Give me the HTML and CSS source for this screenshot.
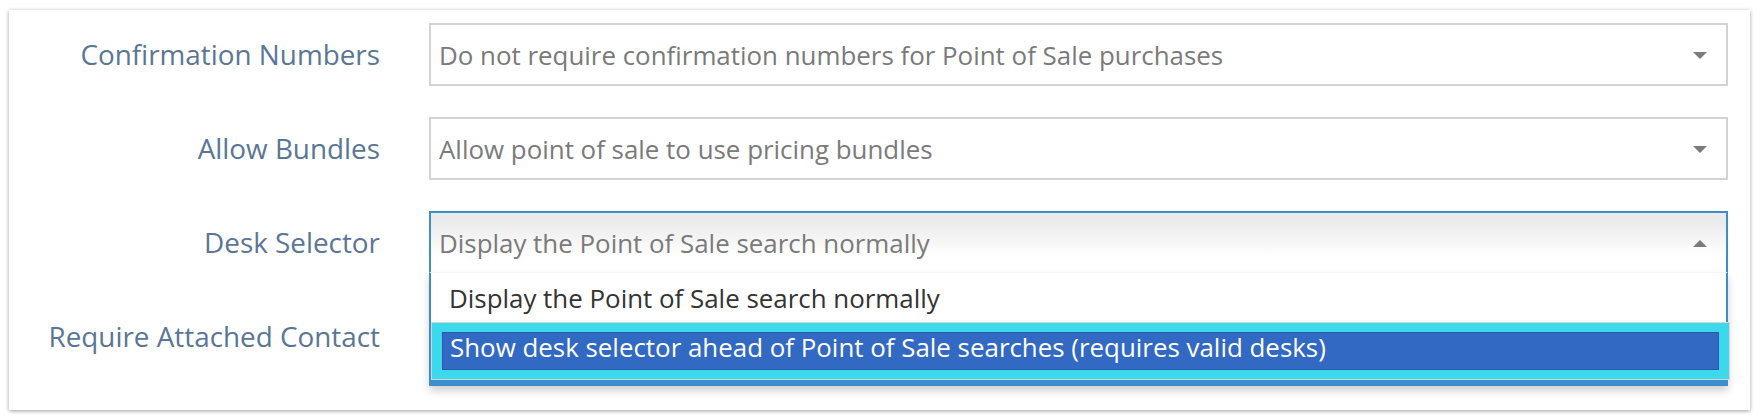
FILE: index.html
```html
<!DOCTYPE html>
<html lang="en">
<head>
<meta charset="utf-8">
<title>Point of Sale settings</title>
<link rel="stylesheet" href="styles.css">
</head>
<body>
<div class="card">
  <div class="row">
    <label class="lbl">Confirmation Numbers</label>
    <div class="select">
      <span class="val">Do not require confirmation numbers for Point of Sale purchases</span>
      <span class="arrow down"></span>
    </div>
  </div>
  <div class="row">
    <label class="lbl">Allow Bundles</label>
    <div class="select">
      <span class="val">Allow point of sale to use pricing bundles</span>
      <span class="arrow down"></span>
    </div>
  </div>
  <div class="row">
    <label class="lbl">Desk Selector</label>
    <div class="select open">
      <span class="val">Display the Point of Sale search normally</span>
      <span class="arrow up"></span>
      <ul class="menu">
        <li class="opt">Display the Point of Sale search normally</li>
        <li class="opt focus"><span class="hl">Show desk selector ahead of Point of Sale searches (requires valid desks)</span></li>
      </ul>
    </div>
  </div>
  <div class="row">
    <label class="lbl">Require Attached Contact</label>
    <div class="select">
      <span class="val">&nbsp;</span>
      <span class="arrow down"></span>
    </div>
  </div>
</div>
</body>
</html>
```
FILE: styles.css
```css
html, body {
  margin: 0;
  padding: 0;
  background: #ffffff;
}

body {
  font-family: "Open Sans", "Noto Sans", sans-serif;
}

.card {
  box-sizing: border-box;
  height: 400px;
  margin: 10px 10px 10px 9px;
  padding: 13px 22px 0 0;
  background: #ffffff;
  box-shadow: 0 1px 4px rgba(0, 0, 0, 0.38);
}

.row {
  display: grid;
  grid-template-columns: 371px 1fr;
  column-gap: 49px;
  align-items: baseline;
  margin-bottom: 31px;
}

.lbl {
  text-align: right;
  font-size: 27.85px;
  line-height: 36px;
  color: #5b7695;
  white-space: nowrap;
}

.select {
  position: relative;
  display: flex;
  align-items: center;
  box-sizing: border-box;
  height: 63px;
  padding: 12px 19px 11px 8px;
  border: 2px solid #d3d3d3;
  background: #ffffff;
  font-size: 25.9px;
  line-height: 36px;
  color: #7a7a7a;
}

.val {
  flex: 1;
  white-space: nowrap;
  overflow: hidden;
}

.arrow {
  width: 0;
  height: 0;
  border-left: 7px solid transparent;
  border-right: 7px solid transparent;
}

.arrow.down {
  border-top: 7px solid #7b7b7b;
}

.arrow.up {
  border-bottom: 7px solid #7b7b7b;
}

.select.open {
  border-color: #3e8ecb;
  background: linear-gradient(#ebebeb 15%, #ffffff 75%);
}

.menu {
  position: absolute;
  z-index: 10;
  top: 100%;
  left: -2px;
  right: -2px;
  margin: 0;
  padding: 0;
  list-style: none;
  background: #ffffff;
  border: 2px solid #3e8ecb;
  border-top: 1px solid #f7f7f7;
  border-bottom-width: 6px;
  box-shadow: 0 5px 8px rgba(0, 0, 0, 0.18);
}

.opt {
  padding: 7px 0 6px 18px;
  line-height: 36px;
  color: #333333;
  white-space: nowrap;
}

.opt.focus {
  padding: 9px 10px;
  margin-right: -4px;
  background: #3cd9ec;
  border: 1px solid #d6d6d6;
}

.hl {
  display: block;
  padding: 0 7px 8px;
  line-height: 28px;
  background: #3169c3;
  border: 1px solid #2a58aa;
  color: #ffffff;
}
```
